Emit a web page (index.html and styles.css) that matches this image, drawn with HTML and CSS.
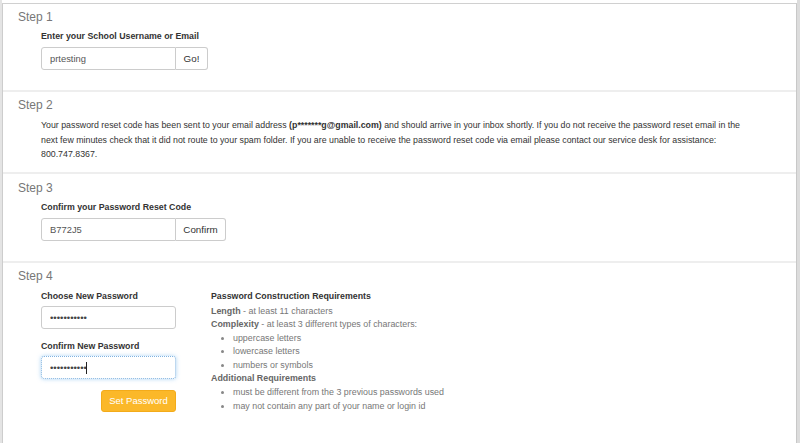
FILE: index.html
```html
<!DOCTYPE html>
<html lang="en">
<head>
<meta charset="utf-8">
<title>Password Reset</title>
<link rel="stylesheet" href="styles.css">
</head>
<body>
<div class="frame">
  <div class="page">
    <section class="step step-1">
      <h2 class="step-title">Step 1</h2>
      <div class="step-body">
        <label class="field-label">Enter your School Username or Email</label>
        <div class="input-group">
          <input class="text-input" type="text" value="prtesting">
          <button class="addon-btn go-btn" type="button">Go!</button>
        </div>
      </div>
    </section>

    <section class="step step-2">
      <h2 class="step-title">Step 2</h2>
      <div class="step-body">
        <p class="message">Your password reset code has been sent to your email address <strong>(p*******g@gmail.com)</strong> and should arrive in your inbox shortly. If you do not receive the password reset email in the next few minutes check that it did not route to your spam folder. If you are unable to receive the password reset code via email please contact our service desk for assistance: 800.747.8367.</p>
      </div>
    </section>

    <section class="step step-3">
      <h2 class="step-title">Step 3</h2>
      <div class="step-body">
        <label class="field-label">Confirm your Password Reset Code</label>
        <div class="input-group">
          <input class="text-input" type="text" value="B772J5">
          <button class="addon-btn confirm-btn" type="button">Confirm</button>
        </div>
      </div>
    </section>

    <section class="step step-4">
      <h2 class="step-title">Step 4</h2>
      <div class="step-body pw-layout">
        <div class="pw-form">
          <label class="field-label">Choose New Password</label>
          <input class="text-input full" type="password" value="abcdefghijk">
          <label class="field-label second">Confirm New Password</label>
          <div class="caret-wrap">
            <input class="text-input full focused" type="password" value="abcdefghijk">
            <span class="caret"></span>
          </div>
          <button class="set-btn" type="button">Set Password</button>
        </div>
        <div class="reqs">
          <div class="reqs-title">Password Construction Requirements</div>
          <div class="req-line"><b>Length</b> - at least 11 characters</div>
          <div class="req-line"><b>Complexity</b> - at least 3 different types of characters:</div>
          <ul class="req-list">
            <li>uppercase letters</li>
            <li>lowercase letters</li>
            <li>numbers or symbols</li>
          </ul>
          <div class="req-line"><b>Additional Requirements</b></div>
          <ul class="req-list">
            <li>must be different from the 3 previous passwords used</li>
            <li>may not contain any part of your name or login id</li>
          </ul>
        </div>
      </div>
    </section>
  </div>
</div>
</body>
</html>
```

FILE: styles.css
```css
* { box-sizing: border-box; }
html, body { margin: 0; height: 100%; background: #fff; }
body {
  font-family: "Liberation Sans", Arial, sans-serif;
  color: #333;
  overflow: hidden;
}
.frame {
  min-height: 100%;
  border-left: 2px solid #e4e4e4;
  border-right: 3px solid #dcdcdc;
  padding-top: 3px;
}
.page {
  min-height: 440px;
  border-top: 1px solid #d0d0d0;
  border-left: 1px solid #cdcdcd;
  border-right: 1px solid #c8c8c8;
}
.step {
  padding: 5px 0 20px 15px;
  border-top: 2px solid #eeeeee;
}
.step-1 { border-top: none; }
.step-2 { padding-bottom: 10px; }
.step-3 { padding-top: 6px; }
.step-title {
  margin: 0;
  font-size: 12px;
  line-height: 16px;
  font-weight: normal;
  color: #777;
}
.step-body { margin-left: 23px; }
.field-label {
  display: block;
  font-size: 8.8px;
  line-height: 12px;
  font-weight: bold;
  color: #333;
  margin-top: 5px;
}
.input-group {
  display: flex;
  margin-top: 5px;
}
.text-input {
  width: 135px;
  height: 23px;
  border: 1px solid #ccc;
  border-radius: 3px 0 0 3px;
  padding: 0 8px;
  font-family: "Liberation Sans", Arial, sans-serif;
  font-size: 9.4px;
  color: #555;
  background: #fff;
  outline: none;
  margin: 0;
}
.addon-btn {
  height: 23px;
  border: 1px solid #ccc;
  border-left: none;
  border-radius: 0 3px 3px 0;
  background: #fff;
  font-family: "Liberation Sans", Arial, sans-serif;
  font-size: 9.8px;
  color: #333;
  padding: 0;
  margin: 0;
}
.go-btn { width: 32px; }
.confirm-btn { width: 50px; }
.message {
  margin: 5px 50px 0 0;
  font-size: 8.8px;
  line-height: 14.5px;
  color: #333;
}
.message strong { font-weight: bold; }

.pw-layout {
  display: flex;
  gap: 35px;
  margin-top: 6px;
}
.pw-form {
  width: 135px;
  display: flex;
  flex-direction: column;
}
.pw-form .field-label { margin-top: 0; }
.pw-form .field-label.second { margin-top: 11px; }
.text-input.full {
  width: 135px;
  border-radius: 3px;
  margin-top: 4px;
  font-size: 9.6px;
  color: #444;
}
.caret-wrap { position: relative; }
.text-input.focused {
  border: 1px dotted #7fb2e0;
  box-shadow: 0 0 4px rgba(102, 175, 233, 0.55);
}
.caret {
  position: absolute;
  left: 45px;
  top: 10px;
  width: 1px;
  height: 12px;
  background: #222;
}
.set-btn {
  align-self: flex-end;
  margin-top: 11px;
  width: 75px;
  height: 22px;
  border: 1px solid #f3ab1a;
  border-radius: 3px;
  background: #fbb829;
  color: #fff;
  font-family: "Liberation Sans", Arial, sans-serif;
  font-size: 9.5px;
  padding: 0;
}
.reqs {
  font-size: 8.9px;
  color: #777;
}
.reqs-title {
  font-weight: bold;
  color: #333;
  font-size: 8.8px;
  line-height: 12px;
  margin-bottom: 3px;
}
.req-line { line-height: 13.6px; }
.req-line b { color: #666; }
.req-list {
  margin: 0;
  padding-left: 22px;
  line-height: 13.6px;
}
.req-list li::marker { color: #888; }
```
